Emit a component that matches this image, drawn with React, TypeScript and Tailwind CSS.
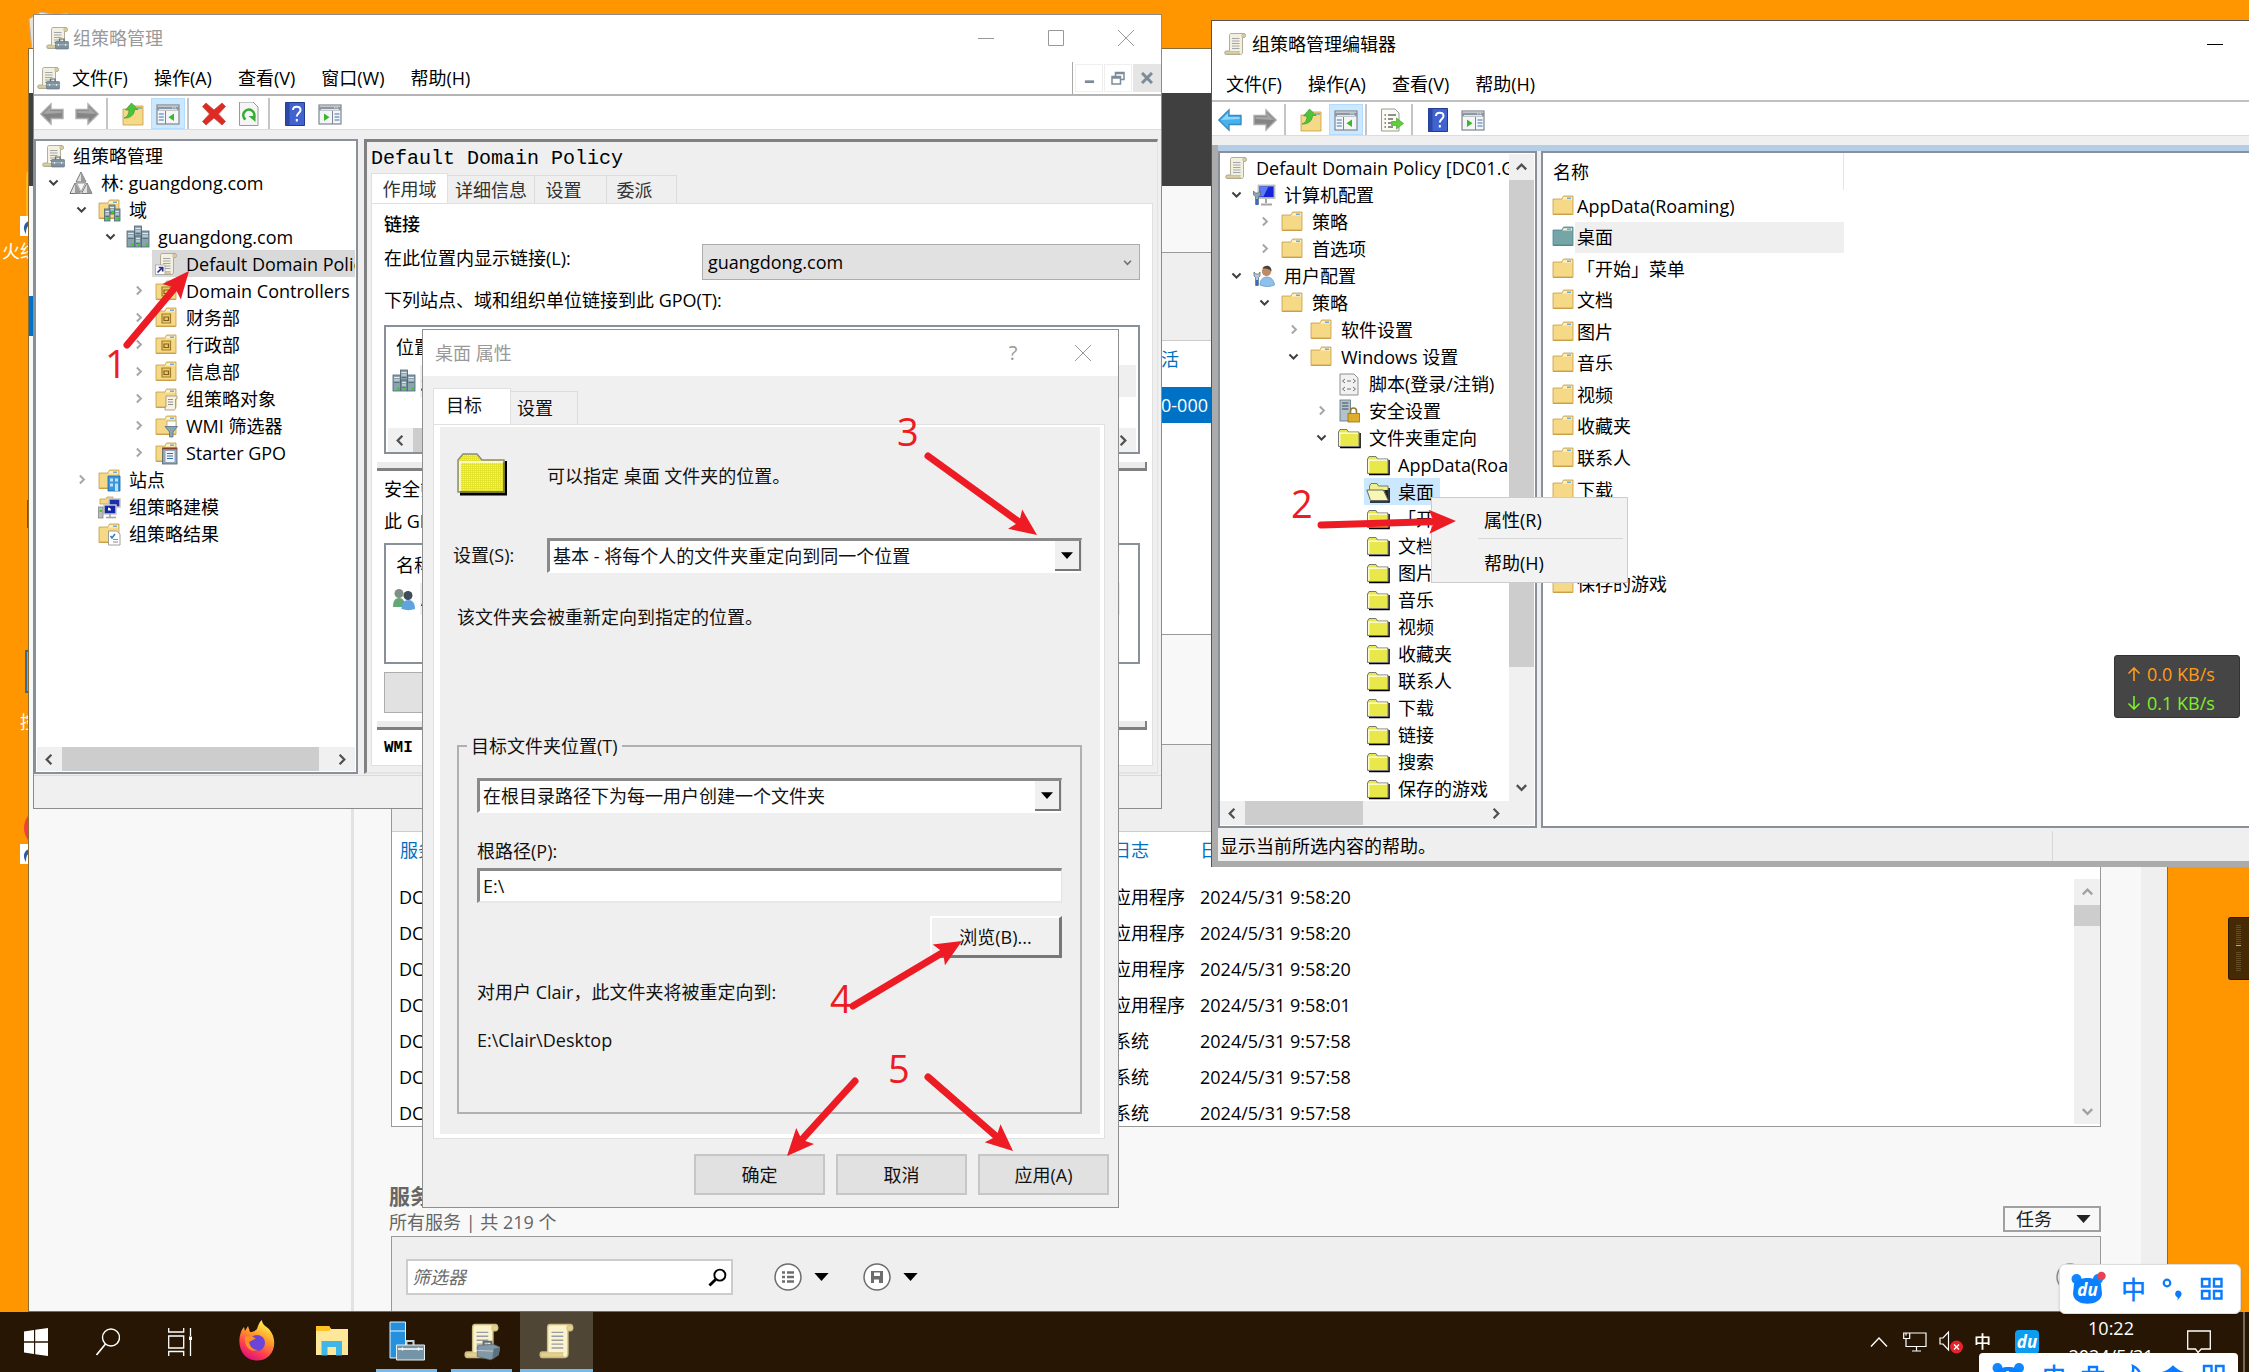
import React from "react";
import clsx from "clsx";

const uiFont = "font-['Open_Sans','Noto_Sans_CJK_SC',sans-serif]";
const monoFont = "font-['Liberation_Mono','Noto_Sans_CJK_SC',monospace]";

/* ---------- icons ---------- */

type IconProps = { className?: string };

function Svg({ className = "size-6", box = "0 0 24 24", children }: { className?: string; box?: string; children: React.ReactNode }) {
	return (
		<svg className={clsx("shrink-0", className)} viewBox={box} fill="none" aria-hidden="true">
			{children}
		</svg>
	);
}

function ScrollShape({ paper = "#f4f0e0", roll = "#dccf9f", edge = "#aaa48e" }: { paper?: string; roll?: string; edge?: string }) {
	return (
		<>
			<path d="M8 1.500h13c2 0 2 4 0 4h-1.500V20c0 1.500-.8 2.500-2 2.500H3c-1.700 0-1.700-3.500 0-3.500h3.500V3.500c0-1.200.5-2 1.500-2z" fill={paper} stroke={edge} strokeWidth=".9" />
			<path d="M19.500 2c-1 .5-1 2.800 0 3.300H21.500c1.500-.3 1.500-3 0-3.300zM3 19.500c-1.200.4-1.200 2.200 0 2.600h14c-1.300-.5-1.300-2-.5-2.600z" fill={roll} stroke={edge} strokeWidth=".5" />
			<path d="M9 6.500h7.500M9 9h7.500M9 11.500h7.500M9 14h7.500M9 16.500h7.500" stroke="#9a9ca6" strokeWidth=".9" />
		</>
	);
}
const ScrollIcon = ({ className }: IconProps) => (
	<Svg className={className}>
		<ScrollShape />
	</Svg>
);
const ScrollToolsIcon = ({ className }: IconProps) => (
	<Svg className={className}>
		<ScrollShape />
		<path d="M14.500 15.500V13h4.500v2.500" stroke="#5d6c78" strokeWidth="1.200" />
		<rect x="10.500" y="15.500" width="13" height="7.500" rx=".8" fill="#7e919e" stroke="#5a6975" strokeWidth=".6" />
		<path d="M10.500 18.800h13" stroke="#c3ced6" strokeWidth=".7" />
		<path d="M13.500 18v1.800M20.500 18v1.800" stroke="#eee" strokeWidth="1.100" />
	</Svg>
);
const BigScrollIcon = ({ tools }: { tools?: boolean }) => (
	<Svg className="h-10 w-9" box="1 0 23 24">
		<ScrollShape paper="#fbf3cb" roll="#e5d189" edge="#cdbb84" />
		{tools && (
			<>
				<path d="M13.500 15.500V12.500h5v2.500" stroke="#5d6c78" strokeWidth="1.200" />
				<path d="M9.500 15l10-1 4.500 2-1 5-5 3-8.500-2z" fill="#8298a6" stroke="#5a6975" strokeWidth=".5" />
				<path d="M19 24l1-7 4-1-1 5z" fill="#5c7180" />
				<path d="M9.500 18l10 .5" stroke="#c3ced6" strokeWidth=".6" />
			</>
		)}
	</Svg>
);
const ScrollLinkIcon = () => (
	<Svg>
		<ScrollShape />
		<rect x="1.500" y="13" width="9.500" height="9.500" fill="#fff" stroke="#999" strokeWidth=".7" />
		<path d="M3.500 20.500l4.500-4.500M4.700 15.500h4v4" stroke="#2a2f80" strokeWidth="1.700" />
	</Svg>
);
const ForestIcon = () => (
	<Svg>
		<path d="M12 1L7 11h10zM6 12L1 22.500h10.500zM18 12l-5.500 10.500H23z" fill="#e2e2e2" stroke="#757575" strokeWidth="1" />
		<path d="M12 1v10l5 0zM6 12v10.500h5.500zM18 12v10.500H23z" fill="#9b9b9b" />
		<path d="M7.500 12h9L12 21z" fill="#f6f6f6" stroke="#7d7d7d" strokeWidth=".8" />
	</Svg>
);

function FolderShape({ tint = "#f6d986", edge = "#c79d44" }: { tint?: string; edge?: string }) {
	return (
		<>
			<path d="M2 5h9l1.500-3H22v18.500H2z" fill={tint} stroke={edge} strokeWidth=".8" />
			<path d="M12.500 3.200h8.500v2.300h-9.500z" fill="#fdf3cf" />
			<path d="M16 4.200h4" stroke="#4a9be0" strokeWidth="1.200" />
			<path d="M2.500 20.200h19" stroke={edge} strokeWidth="1.200" />
		</>
	);
}
function ServerShape({ x = 0, y = 0, w = 6, h = 13 }: { x?: number; y?: number; w?: number; h?: number }) {
	return (
		<>
			<rect x={x} y={y} width={w} height={h} fill="#8aa3af" stroke="#4c6370" strokeWidth=".8" />
			<path d={`M${x + 1} ${y + 2.5}h${w - 2}M${x + 1} ${y + 5}h${w - 2}`} stroke="#dfe9ee" strokeWidth="1" />
			<path d={`M${x + 1} ${y + 7.5}h${w - 2}`} stroke="#4c6370" strokeWidth=".8" />
			<rect x={x + w - 3.500} y={y + h - 3.500} width="2.600" height="2.600" fill="#2fd51e" />
		</>
	);
}
const FolderIcon = ({ className }: IconProps) => (
	<Svg className={className}>
		<FolderShape />
	</Svg>
);
const TealFolderIcon = ({ className }: IconProps) => (
	<Svg className={className}>
		<FolderShape tint="#76a5a8" edge="#4d8690" />
	</Svg>
);
const DomainIcon = () => (
	<Svg>
		<ServerShape x={8.500} y={1} w={7} h={13} />
		<ServerShape x={1} y={6} w={7.500} h={16} />
		<ServerShape x={15.500} y={6} w={7.500} h={16} />
		<ServerShape x={9} y={11} w={6} h={11} />
	</Svg>
);
const DomainsIcon = () => (
	<Svg>
		<FolderShape />
		<ServerShape x={12} y={7} w={6} h={9} />
		<ServerShape x={7.500} y={11} w={5.500} h={12} />
		<ServerShape x={17.500} y={11} w={5.500} h={12} />
	</Svg>
);
const OuIcon = () => (
	<Svg>
		<FolderShape />
		<path d="M8 8h8.500v9H8z" fill="#efc861" stroke="#a07d2c" strokeWidth="1.200" />
		<path d="M10 11h4.500v3.500H10z" stroke="#7d6020" strokeWidth="1.200" />
	</Svg>
);
const GpoFolderIcon = () => (
	<Svg>
		<FolderShape />
		<path d="M12 9h11v3h-1.500v9c0 1-.5 2-1.500 2h-9v-3h1z" fill="#faf3dc" stroke="#9b8f74" strokeWidth=".8" />
		<path d="M14 12.500h5M14 15h5M14 17.500h5" stroke="#8b8f9a" strokeWidth="1" />
	</Svg>
);
const FilterFolderIcon = () => (
	<Svg>
		<FolderShape />
		<rect x="13" y="7" width="9" height="6" fill="#fff" stroke="#999" strokeWidth=".7" />
		<path d="M11 12.500h12.500l-4.500 5.500v5h-3.500v-5z" fill="#8ba5b3" stroke="#587181" strokeWidth=".8" />
	</Svg>
);
const StarterIcon = () => (
	<Svg>
		<FolderShape />
		<rect x="8.500" y="7" width="14.500" height="16" fill="#8fa6ba" stroke="#55606b" strokeWidth=".8" />
		<path d="M8.500 7.500h14.500" stroke="#8b3b2b" strokeWidth="1.600" />
		<rect x="11.500" y="10" width="9" height="11" fill="#eef3f8" />
		<path d="M13 12.500h6M13 15h6M13 17.500h6" stroke="#3c6fa8" strokeWidth="1" />
	</Svg>
);
const SitesIcon = () => (
	<Svg>
		<FolderShape />
		<path d="M11 8h12v15H11z" fill="#3b97dc" stroke="#1b63a5" strokeWidth=".8" />
		<path d="M13 10.500h3v3h-3zM18 10.500h3v3h-3zM13 15.500h3v3h-3zM18 15.500h3V23h-3z" fill="#bfe0fa" />
	</Svg>
);
const ModelIcon = () => (
	<Svg>
		<path d="M3 4h6l1-2h6v7H3z" fill="#f6d986" stroke="#c79d44" strokeWidth=".8" />
		<rect x="12" y="4" width="11" height="8" fill="#1c2fae" stroke="#c4c4c4" strokeWidth="1.500" />
		<rect x="7" y="10" width="12" height="9" fill="#1426a8" stroke="#c9c9c9" strokeWidth="1.500" />
		<path d="M9 22.500h10M13 19v3" stroke="#a0a0a0" strokeWidth="1.500" />
		<path d="M11 12.500a3 3 0 013 3h-3z" fill="#fff" />
		<rect x="1.500" y="12" width="4.500" height="11" fill="#bdbdbd" stroke="#7b7b7b" strokeWidth=".7" />
		<rect x="2.500" y="15" width="2.500" height="2" fill="#35d225" />
	</Svg>
);
const ResultsIcon = () => (
	<Svg>
		<FolderShape />
		<path d="M11.500 9h8l3.500 3v11H11.500z" fill="#fff" stroke="#888" strokeWidth=".8" />
		<path d="M13.500 14l1.500 2 3-4" stroke="#3778c2" strokeWidth="1.500" />
		<path d="M16 17.500h5M16 20h5" stroke="#8a8a8a" strokeWidth="1" />
	</Svg>
);
const ComputerIcon = () => (
	<Svg>
		<rect x="6.500" y="2.500" width="16" height="12.500" fill="#1526d8" stroke="#bcbcbc" strokeWidth="1.800" />
		<path d="M7.500 3.500h9l-5 10h-4z" fill="#5f7af2" />
		<path d="M14 16v4M9 21.500h11" stroke="#a5a5a5" strokeWidth="2" />
		<path d="M1.500 8v4l2 1.500v8h3v-8l2-1.500V8l-2 2H3.500z" fill="#8fa6b8" stroke="#506676" strokeWidth=".7" />
		<path d="M4 16h2v6H4z" fill="#2f70c0" />
	</Svg>
);
const UserIcon = () => (
	<Svg>
		<path d="M8 21c0-5 3-8 7-8s7 3 7.500 8c-4 2-10 2-14.500 0z" fill="#8fc0ea" stroke="#5c94c5" strokeWidth=".7" />
		<circle cx="14.500" cy="7.500" r="4.600" fill="#c08a63" />
		<path d="M10.500 4.500C12 .5 20 .5 19.500 7.500c-1.500-2.500-5-3-9-3z" fill="#4a4038" />
		<path d="M2 8v4l1.500 1.500v8h3v-8L8 12V8L6.500 10h-3z" fill="#b8c6d2" stroke="#506676" strokeWidth=".7" />
		<path d="M4 16h2v5.500H4z" fill="#2f70c0" />
	</Svg>
);
const UsersIcon = () => (
	<Svg>
		<path d="M1 20c0-6 2-9 6-9s6 3 6 9z" fill="#63a877" />
		<circle cx="7" cy="6.500" r="4.500" fill="#7f9184" />
		<path d="M9.500 22c0-6 3-9 7-9s6.500 3 6.500 9c-4 1.500-9 1.500-13.500 0z" fill="#5fa3df" />
		<circle cx="16" cy="8.500" r="4.500" fill="#3f4c59" />
	</Svg>
);
const ScriptIcon = () => (
	<Svg>
		<path d="M3 2h14l4 4v17H3z" fill="#f1f1f1" stroke="#8f8f8f" strokeWidth="1" />
		<path d="M8 7l-2.500 2L8 11M16 7l2.500 2L16 11M10 9h4M8 15l-2.500 2L8 19M16 15l2.500 2L16 19M10 17h4" stroke="#707070" strokeWidth="1" />
	</Svg>
);
const SecurityIcon = () => (
	<Svg>
		<rect x="3" y="1" width="10.500" height="21" fill="#b3c3cc" stroke="#5b717d" strokeWidth=".8" />
		<path d="M5 4h6.500M5 7h6.500M5 10h6.500" stroke="#3c4c56" strokeWidth="1.200" />
		<path d="M13.500 14.500V12a3 3 0 016 0v2.500" stroke="#8f7a33" strokeWidth="1.600" />
		<rect x="11" y="14.500" width="11.500" height="8.500" fill="#e0ad2b" stroke="#9a7212" strokeWidth=".8" />
	</Svg>
);
const ClassicFolderIcon = ({ className }: IconProps) => (
	<Svg className={className}>
		<path d="M3 21.500h20V7" stroke="#000" strokeWidth="1.600" />
		<path d="M1.500 6l1.500-2.500h7L11.500 6H22v14.500H1.500z" fill="#e8e84a" stroke="#777" strokeWidth="1" />
		<path d="M2.800 19.500V7.200h18.200" stroke="#fffff0" strokeWidth="1.200" />
	</Svg>
);
const ClassicOpenIcon = () => (
	<Svg>
		<path d="M4 22h19V8" stroke="#000" strokeWidth="1.600" />
		<path d="M3.500 9V6L5 3.500h6L12.500 6H22v14.500H6z" fill="#f1f18a" stroke="#777" strokeWidth="1" />
		<path d="M.8 10h16.500l5 10.500H4.500z" fill="#f7f7b4" stroke="#666" strokeWidth="1" />
		<path d="M18 10l4.500 10.500V10z" fill="#222" />
	</Svg>
);
const BigFolderIcon = () => (
	<Svg className="h-[43px] w-[50px]" box="0 0 50 43">
		<defs>
			<pattern id="dither" width="2" height="2" patternUnits="userSpaceOnUse">
				<rect width="2" height="2" fill="#e4e42c" />
				<rect width="1" height="1" fill="#f0f08c" />
			</pattern>
		</defs>
		<path d="M3 41h46V8" stroke="#000" strokeWidth="3" />
		<path d="M1 39V7l5-6h14l5 6h22v32z" fill="url(#dither)" stroke="#8b8b8b" strokeWidth="1.500" />
		<path d="M3 38V9h43" stroke="#fffff0" strokeWidth="1.500" />
		<path d="M3 39h44V9" stroke="#77771a" strokeWidth="1.500" />
	</Svg>
);

const BackIcon = ({ blue }: { blue?: boolean }) => (
	<Svg>
		<path d="M.8 12L11 2v5.500h12v9H11V22z" fill={blue ? "#45b1ee" : "#858585"} stroke={blue ? "#3a8dc4" : "#adadad"} strokeWidth="1.400" />
		<path d="M3 12l7-7v4h11.500v2z" fill={blue ? "#8fd6f8" : "#a5a5a5"} />
	</Svg>
);
const ForwardIcon = () => (
	<Svg>
		<path d="M23.200 12L13 2v5.500H1v9h12V22z" fill="#858585" stroke="#adadad" strokeWidth="1.400" />
		<path d="M21 12l-7-7v4H2.500v2z" fill="#a5a5a5" />
	</Svg>
);
const UpFolderIcon = () => (
	<Svg>
		<path d="M2 7h8l2-3h10v19H2z" fill="#f6d986" stroke="#c79d44" strokeWidth=".8" />
		<path d="M16 6h5" stroke="#4a9be0" strokeWidth="1.200" />
		<path d="M3 16c3.500-1 5-4 5-8H4.500L10.500 1 17 7.500h-3.500c0 5-4 9-10.500 8.500z" fill="#4cc33a" stroke="#3b9a2d" strokeWidth=".7" />
	</Svg>
);
const PanelIcon = ({ flip }: { flip?: boolean }) => (
	<Svg>
		<rect x="1" y="3" width="22" height="19" fill="#f4f5f6" stroke="#7d8690" strokeWidth="1.200" />
		<path d="M1 4.500h22v4H1z" fill="#8d97a1" />
		<path d="M16 5.800h1.500M18.500 5.800H20M3 7.500h18" stroke="#dfe5ea" />
		{flip ? (
			<>
				<path d="M14.500 9v13" stroke="#7d8690" />
				<path d="M16.500 12h5M16.500 15h5M16.500 18h5" stroke="#3d73b5" strokeWidth="1.200" />
				<path d="M6 11.500v7.500l5.500-3.700z" fill="#3ab72b" />
			</>
		) : (
			<>
				<path d="M9.500 9v13" stroke="#7d8690" />
				<path d="M2.800 12h5M2.800 15h5M2.800 18h5" stroke="#3d73b5" strokeWidth="1.200" />
				<path d="M18 11.500v7.500l-5.500-3.700z" fill="#3ab72b" />
			</>
		)}
	</Svg>
);
const DeleteIcon = () => (
	<Svg>
		<path d="M4 1l8 7L20 1l3.500 3.500L16.500 12l7 7.500L20 23l-8-7-8 7-3.500-3.500L7.500 12l-7-7.500z" fill="#dd2a22" stroke="#c04a44" strokeWidth=".8" />
	</Svg>
);
const RefreshIcon = () => (
	<Svg>
		<path d="M2.500 0H16l5 5v18.500H2.500z" fill="#f5f5f5" stroke="#9a9a9a" />
		<path d="M8.500 17.500a5.500 5.500 0 118-1.500" stroke="#35ad34" strokeWidth="2.600" />
		<path d="M11.500 14h7v6z" fill="#35ad34" />
	</Svg>
);
const ExportIcon = () => (
	<Svg>
		<path d="M1.500 1H15l4 4v18H1.500z" fill="#fbfbf1" stroke="#9a9a9a" />
		<path d="M4.500 7H6M4.500 11H6M4.500 15H6M4.500 19H6M8 7h8M8 11h5M8 15h3M8 19h5" stroke="#6c6c6c" strokeWidth="1.300" />
		<path d="M11.500 13.500h5v-3.500l7 5.500-7 5.500v-3.500h-5z" fill="#62cc3f" stroke="#4aa634" strokeWidth=".7" />
	</Svg>
);
const HelpIcon = () => (
	<Svg>
		<path d="M2.500 .5h19v23h-19z" fill="#4063cf" stroke="#23398d" />
		<path d="M2.500 .5h4v23h-4z" fill="#2b47a8" />
		<path d="M10 8c0-4.500 7.500-4.500 7.500 0 0 3-3.700 3-3.700 6.500M13.800 17v2.500" stroke="#fff" strokeWidth="2" />
	</Svg>
);

function Chevron({ dir, className = "size-[15px]" }: { dir: "up" | "down" | "left" | "right"; className?: string }) {
	const paths = { up: "M3 10l5-5 5 5", down: "M3 5.500l5 5 5-5", left: "M10 3L5 8l5 5", right: "M6 3l5 5-5 5" };
	return (
		<Svg className={className} box="0 0 16 16">
			<path d={paths[dir]} stroke="currentColor" strokeWidth="2.400" />
		</Svg>
	);
}
const Triangle = ({ className = "h-[9px] w-[15px]" }: IconProps) => (
	<Svg className={className} box="0 0 16 9">
		<path d="M0 0h16L8 9z" fill="currentColor" />
	</Svg>
);
const MinIcon = () => (
	<Svg className="size-4" box="0 0 16 16">
		<path d="M0 8.500h16" stroke="currentColor" />
	</Svg>
);
const MaxIcon = () => (
	<Svg className="size-4" box="0 0 16 16">
		<path d="M.5 .5h15v15H.5z" stroke="currentColor" />
	</Svg>
);
const CloseIcon = () => (
	<Svg className="size-4" box="0 0 16 16">
		<path d="M0 0l16 16M16 0L0 16" stroke="currentColor" />
	</Svg>
);

/* ---------- shared pieces ---------- */

type TreeRow = { level: number; open?: boolean; closed?: boolean; icon: React.ReactNode; label: string; selected?: boolean };

const indents = ["pl-0.5", "pl-1", "pl-8", "pl-[61px]", "pl-[89px]", "pl-[118px]"];

function Tree({ rows, fill }: { rows: TreeRow[]; fill?: boolean }) {
	return (
		<ul className="min-w-0 flex-1 overflow-hidden">
			{rows.map((row, i) => (
				<li key={i} className={clsx("flex h-[27px] items-center whitespace-nowrap", indents[row.level])}>
					{row.level > 0 && (
						<span className="mr-0.5 flex w-6 shrink-0 justify-center">
							{row.open && <Chevron dir="down" className="size-[13px] text-[#404040]" />}
							{row.closed && <Chevron dir="right" className="size-[13px] text-[#a6a6a6]" />}
						</span>
					)}
					<span className={clsx("flex h-full items-center gap-2 pr-1.5 pl-0.5", row.selected && (fill ? "flex-1 bg-[#d9d9d9]" : "bg-[#cce8ff]"))}>
						{row.icon}
						{row.label}
					</span>
				</li>
			))}
		</ul>
	);
}

function HScroll({ thumb, trail = "pr-0" }: { thumb: string; trail?: string }) {
	return (
		<div className={clsx("flex h-6 shrink-0 items-center bg-[#f0f0f0] text-[#505050]", trail)}>
			<span className="flex w-[25px] justify-center">
				<Chevron dir="left" />
			</span>
			<span className={clsx("h-full bg-[#cdcdcd]", thumb)} />
			<span className="ml-auto flex w-7 justify-center">
				<Chevron dir="right" />
			</span>
		</div>
	);
}

function ToolButton({ label, active, children }: { label: string; active?: boolean; children: React.ReactNode }) {
	return (
		<button type="button" aria-label={label} className={clsx("flex h-full w-[34px] items-center justify-center", active && "border border-[#b3dcff] bg-[#cce8ff]")}>
			{children}
		</button>
	);
}
const ToolSep = () => <span className="ml-px h-full w-[9px] border-l-2 border-[#c4c4c4]" />;

function MenuBar({ items }: { items: string[] }) {
	return (
		<>
			{items.map((item) => (
				<button key={item} type="button">
					{item}
				</button>
			))}
		</>
	);
}

function ComboBox({ id, value }: { id: string; value: string }) {
	return (
		<div className="flex h-[35px] flex-1 border-t-[3px] border-r border-b-2 border-l-[3px] border-[#8a8a8a] border-r-[#e3e3e3] border-b-white bg-white">
			<select id={id} className="min-w-0 flex-1 appearance-none bg-white pl-[3px] outline-none">
				<option>{value}</option>
			</select>
			<span className="pointer-events-none flex w-[26px] items-center justify-center border-r-2 border-b-2 border-[#777] bg-[#f0f0f0] text-black">
				<Triangle className="h-[7px] w-3" />
			</span>
		</div>
	);
}

/* ---------- server manager ---------- */

const events = [
	["DC01", "应用程序", "2024/5/31 9:58:20"],
	["DC01", "应用程序", "2024/5/31 9:58:20"],
	["DC01", "应用程序", "2024/5/31 9:58:20"],
	["DC01", "应用程序", "2024/5/31 9:58:01"],
	["DC01", "系统", "2024/5/31 9:57:58"],
	["DC01", "系统", "2024/5/31 9:57:58"],
	["DC01", "系统", "2024/5/31 9:57:58"],
];

function ServerManager() {
	return (
		<section className="absolute top-12 right-[81px] bottom-0 left-7 flex flex-col overflow-hidden border border-[#8a6a35] bg-[#f8f8f8]">
			<div className="h-11 shrink-0 bg-white" />
			<div className="h-[93px] shrink-0 bg-[#404040]" />
			<div className="flex min-h-0 flex-1">
				<div className="w-[325px] shrink-0 border-r-[3px] border-[#e2e2e2] pt-[110px]">
					<div className="h-10 bg-[#0072c6]" />
				</div>
				<div className="flex min-w-0 flex-1 flex-col pt-[66px] pr-10 pl-[37px]">
					<div className="h-[383px] shrink-0 border border-[#999] bg-white">
						<div className="h-[88px] border-b border-[#ccc] bg-[#efefef]" />
						<div className="h-[46px] pt-0.5 pl-[751px] leading-8 text-[#0070c0]">激活</div>
						<div className="flex h-9 items-center bg-[#0072c6] pl-[769px] text-white">0-000</div>
					</div>
					<div className="mt-[109px] flex h-[383px] shrink-0 flex-col overflow-hidden border border-[#999] bg-white">
						<div className="h-[87px] shrink-0 border-b border-[#ccc] bg-[#efefef]" />
						<div className="flex min-h-0 flex-1">
							<div className="min-w-0 flex-1 overflow-hidden">
								<table className="w-full table-fixed text-left text-black">
									<colgroup>
										<col className="w-[721px]" />
										<col className="w-[87px]" />
										<col />
									</colgroup>
									<thead>
										<tr className="h-[47px] align-top text-[#0070c0]">
											<th className="pt-1.5 pl-2 font-normal">服务器名称</th>
											<th className="pt-1.5 font-normal">日志</th>
											<th className="pt-1.5 font-normal">日期和时间</th>
										</tr>
									</thead>
									<tbody>
										{events.map(([server, log, time], i) => (
											<tr key={i} className="h-9">
												<td className="pl-[7px]">{server}</td>
												<td>{log}</td>
												<td>{time}</td>
											</tr>
										))}
									</tbody>
								</table>
							</div>
							<div className="mt-[47px] mb-0.5 flex w-[26px] flex-col bg-[#f0f0f0] text-[#a0a0a0]">
								<span className="flex h-[26px] items-center justify-center">
									<Chevron dir="up" />
								</span>
								<span className="h-[21px] bg-[#cdcdcd]" />
								<span className="mt-auto flex h-[26px] items-center justify-center">
									<Chevron dir="down" />
								</span>
							</div>
						</div>
					</div>
					<div className="mt-[54px] flex h-[55px] shrink-0 items-end justify-between text-[#666]">
						<div className="-ml-0.5">
							<h2 className="text-[21px] leading-6 font-bold">服务</h2>
							<p className="leading-7">所有服务 | 共 219 个</p>
						</div>
						<button type="button" className="mb-1 flex h-[26px] w-[98px] items-center justify-between border-2 border-[#a0a0a0] pr-2 pl-[11px] text-[#222]">
							任务
							<Triangle className="h-2 w-[15px]" />
						</button>
					</div>
					<div className="flex flex-1 items-start border border-b-0 border-[#999] bg-[#efefef] pt-[22px] pr-4 pl-3.5">
						<label className="flex h-9 w-[327px] items-center border-2 border-[#ccc] bg-white pr-1 pl-1">
							<input aria-label="筛选器" placeholder="筛选器" className="min-w-0 flex-1 italic outline-none placeholder:text-[#6b6b6b]" />
							<Svg className="size-[19px] text-black" box="0 0 20 20">
								<circle cx="12.500" cy="7.500" r="5.800" stroke="currentColor" strokeWidth="2" />
								<path d="M8 12l-6.500 6.500" stroke="currentColor" strokeWidth="3" />
							</Svg>
						</label>
						<div className="ml-[41px] flex h-9 items-center text-black">
							<Svg className="size-7" box="0 0 28 28">
								<circle cx="14" cy="14" r="13" fill="#fff" stroke="#6d6d6d" strokeWidth="1.500" />
								<path d="M8 9.500h3M8 14h3M8 18.500h3M13 9.500h7M13 14h7M13 18.500h7" stroke="#6d6d6d" strokeWidth="2.600" />
							</Svg>
							<Triangle className="ml-3 h-2 w-[15px]" />
							<Svg className="ml-[34px] size-7" box="0 0 28 28">
								<circle cx="14" cy="14" r="13" fill="#fff" stroke="#6d6d6d" strokeWidth="1.500" />
								<path d="M8 8h12v12H8z" fill="#6d6d6d" />
								<path d="M11 9.500h6v3.500h-6zM11 16.500h5V20h-5z" fill="#fff" />
							</Svg>
							<Triangle className="ml-3 h-2 w-[15px]" />
						</div>
						<Svg className="mt-1 ml-auto size-7" box="0 0 28 28">
							<circle cx="14" cy="14" r="13" stroke="#8b8b8b" strokeWidth="1.500" />
						</Svg>
					</div>
				</div>
				<div className="w-[26px] shrink-0 bg-[#efefef]" />
			</div>
		</section>
	);
}

/* ---------- group policy management ---------- */

const consoleTree: TreeRow[] = [
	{ level: 0, icon: <ScrollToolsIcon />, label: "组策略管理" },
	{ level: 1, open: true, icon: <ForestIcon />, label: "林: guangdong.com" },
	{ level: 2, open: true, icon: <DomainsIcon />, label: "域" },
	{ level: 3, open: true, icon: <DomainIcon />, label: "guangdong.com" },
	{ level: 4, icon: <ScrollLinkIcon />, label: "Default Domain Policy", selected: true },
	{ level: 4, closed: true, icon: <OuIcon />, label: "Domain Controllers" },
	{ level: 4, closed: true, icon: <OuIcon />, label: "财务部" },
	{ level: 4, closed: true, icon: <OuIcon />, label: "行政部" },
	{ level: 4, closed: true, icon: <OuIcon />, label: "信息部" },
	{ level: 4, closed: true, icon: <GpoFolderIcon />, label: "组策略对象" },
	{ level: 4, closed: true, icon: <FilterFolderIcon />, label: "WMI 筛选器" },
	{ level: 4, closed: true, icon: <StarterIcon />, label: "Starter GPO" },
	{ level: 2, closed: true, icon: <SitesIcon />, label: "站点" },
	{ level: 2, icon: <ModelIcon />, label: "组策略建模" },
	{ level: 2, icon: <ResultsIcon />, label: "组策略结果" },
];

const RaisedBar = () => <div className="-mx-[7px] h-[9px] shrink-0 border-r-2 border-b-[3px] border-[#808080] bg-[#ececec]" />;

function PolicyConsole() {
	return (
		<section className="absolute top-[14px] left-[33px] flex h-[795px] w-[1129px] flex-col border border-[#8c8c8c] bg-[#efefef] text-black">
			<header className="flex h-[47px] shrink-0 items-center bg-white pr-[27px] pb-0.5 pl-[11px] text-[#999]">
				<ScrollToolsIcon />
				<h1 className="ml-1">组策略管理</h1>
				<div className="ml-auto flex gap-[54px]">
					<button type="button" aria-label="最小化">
						<MinIcon />
					</button>
					<button type="button" aria-label="最大化">
						<MaxIcon />
					</button>
					<button type="button" aria-label="关闭">
						<CloseIcon />
					</button>
				</div>
			</header>
			<nav className="flex h-[34px] shrink-0 items-center border-b-2 border-[#b4b4b4] bg-white pl-0.5">
				<ScrollToolsIcon />
				<div className="ml-3 flex gap-[26px]">
					<MenuBar items={["文件(F)", "操作(A)", "查看(V)", "窗口(W)", "帮助(H)"]} />
				</div>
				<div className="ml-auto flex h-full items-center gap-px border-l border-[#a8a8a8] pl-0.5 text-[#7c8b9a]">
					<button type="button" aria-label="最小化子窗口" className="flex h-7 w-7 items-center justify-center border border-[#efefef]">
						<Svg className="size-[11px]" box="0 0 12 12">
							<path d="M1 9.500h10" stroke="currentColor" strokeWidth="3" />
						</Svg>
					</button>
					<button type="button" aria-label="还原子窗口" className="flex h-7 w-7 items-center justify-center border border-[#efefef]">
						<Svg className="size-[14px]" box="0 0 14 14">
							<path d="M4.500 5V1.500h8.500v7h-3M4.500 2.500H13M1 5.500h8.500V13H1zM1 7h8.500" stroke="currentColor" strokeWidth="1.500" />
						</Svg>
					</button>
					<button type="button" aria-label="关闭子窗口" className="flex h-7 w-7 items-center justify-center bg-[#e5e5e5]">
						<Svg className="size-[12px]" box="0 0 12 12">
							<path d="M1 1l10 10M11 1L1 11" stroke="currentColor" strokeWidth="3" />
						</Svg>
					</button>
				</div>
			</nav>
			<div className="flex h-[34px] shrink-0 items-center gap-px border-b border-[#dcdcdc] bg-white pt-0.5 pl-px">
				<ToolButton label="后退">
					<BackIcon />
				</ToolButton>
				<ToolButton label="前进">
					<ForwardIcon />
				</ToolButton>
				<ToolSep />
				<ToolButton label="上一级">
					<UpFolderIcon />
				</ToolButton>
				<ToolButton label="显示控制台树" active>
					<PanelIcon />
				</ToolButton>
				<ToolSep />
				<ToolButton label="删除">
					<DeleteIcon />
				</ToolButton>
				<ToolButton label="刷新">
					<RefreshIcon />
				</ToolButton>
				<ToolSep />
				<ToolButton label="帮助">
					<HelpIcon />
				</ToolButton>
				<ToolButton label="显示操作窗格">
					<PanelIcon flip />
				</ToolButton>
			</div>
			<div className="flex min-h-0 flex-1 gap-1.5 pt-[9px] pr-[3px]">
				<div className="flex w-[324px] shrink-0 flex-col border-2 border-[#8a909a] bg-white px-px pt-px pb-px">
					<Tree rows={consoleTree} fill />
					<HScroll thumb="w-[257px]" />
				</div>
				<div className="flex min-w-0 flex-1 flex-col border-t-[3px] border-r border-b-2 border-l-[3px] border-[#808080] border-r-[#e3e3e3] border-b-[#e3e3e3] pr-1 pb-1.5 pl-1">
					<h2 className={clsx("flex h-[31px] shrink-0 items-center pt-0.5 text-[20px]", monoFont)}>Default Domain Policy</h2>
					<div className="flex h-[30px] shrink-0 items-end text-[#333]" role="tablist">
						<button type="button" role="tab" className="h-[30px] w-[77px] border border-b-0 border-[#e0e0e0] bg-white">
							作用域
						</button>
						<button type="button" role="tab" className="h-7 w-[87px] border-t border-r border-[#dcdcdc]">
							详细信息
						</button>
						<button type="button" role="tab" className="h-7 w-[72px] border-t border-r border-[#dcdcdc] pr-3.5">
							设置
						</button>
						<button type="button" role="tab" className="h-7 w-[70px] border-t border-r border-[#dcdcdc] pr-3.5">
							委派
						</button>
					</div>
					<div className="flex min-h-0 flex-1 flex-col overflow-hidden border border-[#e0e0e0] bg-white px-3">
						<h3 className="mt-1.5 h-7 shrink-0 leading-7 font-medium">链接</h3>
						<div className="mt-1.5 flex shrink-0 items-start justify-between">
							<label htmlFor="link-scope" className="leading-7">
								在此位置内显示链接(L):
							</label>
							<div className="flex h-9 w-[438px] items-center border border-[#adadad] bg-[#e1e1e1] pr-1.5">
								<select id="link-scope" className="h-full flex-1 appearance-none bg-[#e1e1e1] pl-[5px] outline-none">
									<option>guangdong.com</option>
								</select>
								<Chevron dir="down" className="pointer-events-none size-[11px] text-[#707070]" />
							</div>
						</div>
						<p className="mt-1.5 h-7 shrink-0 leading-7">下列站点、域和组织单位链接到此 GPO(T):</p>
						<div className="mt-[11px] flex h-[129px] shrink-0 flex-col border-2 border-[#8a909a] px-0.5">
							<span className="mt-1.5 ml-2 h-7 leading-7">位置</span>
							<div className="mt-1 flex h-8 items-center gap-1 pl-1">
								<DomainIcon />
								<span className="flex h-8 flex-1 items-center bg-[#efefef] pl-px">gu</span>
							</div>
							<div className="mt-auto">
								<HScroll thumb="w-[500px]" />
							</div>
						</div>
						<div className="h-2 shrink-0" />
						<RaisedBar />
						<h3 className="mt-1 h-7 shrink-0 leading-7">安全筛选</h3>
						<p className="mt-1 h-7 shrink-0 leading-7">此 GPO</p>
						<div className="mt-2 h-[121px] shrink-0 border-2 border-[#8a909a] px-0.5">
							<p className="mt-1.5 ml-2 h-7 leading-7">名称</p>
							<div className="mt-1 mr-4 flex h-8 items-center gap-1 pl-1">
								<UsersIcon />
								<span className="flex h-8 flex-1 items-center bg-[#efefef] pl-px">Au</span>
							</div>
						</div>
						<div className="mt-2 h-[41px] w-[130px] shrink-0 border border-[#adadad] bg-[#e1e1e1]" />
						<div className="h-2 shrink-0" />
						<RaisedBar />
						<h3 className={clsx("mt-1 h-7 shrink-0 text-[16px] leading-7 font-bold", monoFont)}>WMI</h3>
					</div>
				</div>
			</div>
			<footer className="mt-px h-[33px] shrink-0 border-t border-[#dadada] bg-[#f0f0f0]" />
		</section>
	);
}

/* ---------- group policy editor ---------- */

const redirectFolders = ["AppData(Roaming)", "桌面", "「开始」菜单", "文档", "图片", "音乐", "视频", "收藏夹", "联系人", "下载", "链接", "搜索", "保存的游戏"];

const editorTree: TreeRow[] = [
	{ level: 0, icon: <ScrollIcon />, label: "Default Domain Policy [DC01.GUANGDONG.COM]" },
	{ level: 1, open: true, icon: <ComputerIcon />, label: "计算机配置" },
	{ level: 2, closed: true, icon: <FolderIcon />, label: "策略" },
	{ level: 2, closed: true, icon: <FolderIcon />, label: "首选项" },
	{ level: 1, open: true, icon: <UserIcon />, label: "用户配置" },
	{ level: 2, open: true, icon: <FolderIcon />, label: "策略" },
	{ level: 3, closed: true, icon: <FolderIcon />, label: "软件设置" },
	{ level: 3, open: true, icon: <FolderIcon />, label: "Windows 设置" },
	{ level: 4, icon: <ScriptIcon />, label: "脚本(登录/注销)" },
	{ level: 4, closed: true, icon: <SecurityIcon />, label: "安全设置" },
	{ level: 4, open: true, icon: <ClassicFolderIcon />, label: "文件夹重定向" },
	...redirectFolders.map((label) => ({
		level: 5,
		icon: label === "桌面" ? <ClassicOpenIcon /> : <ClassicFolderIcon />,
		label,
		selected: label === "桌面",
	})),
];

function PolicyEditor() {
	return (
		<section className="absolute top-[20px] right-0 left-[1211px] flex h-[847px] flex-col overflow-hidden border-t border-l border-[#555] bg-[#efefef] text-black">
			<header className="flex h-[46px] shrink-0 items-center bg-white pr-[26px] pl-[11px]">
				<ScrollIcon />
				<h1 className="ml-[5px]">组策略管理编辑器</h1>
				<button type="button" aria-label="最小化" className="ml-auto">
					<MinIcon />
				</button>
			</header>
			<nav className="flex h-[35px] shrink-0 items-center gap-[26px] border-b-2 border-[#c0c0c0] bg-white pl-3.5">
				<MenuBar items={["文件(F)", "操作(A)", "查看(V)", "帮助(H)"]} />
			</nav>
			<div className="flex h-[34px] shrink-0 items-center gap-px border-b border-[#dcdcdc] bg-white pt-0.5 pl-px">
				<ToolButton label="后退">
					<BackIcon blue />
				</ToolButton>
				<ToolButton label="前进">
					<ForwardIcon />
				</ToolButton>
				<ToolSep />
				<ToolButton label="上一级">
					<UpFolderIcon />
				</ToolButton>
				<ToolButton label="显示控制台树" active>
					<PanelIcon />
				</ToolButton>
				<ToolSep />
				<ToolButton label="导出列表">
					<ExportIcon />
				</ToolButton>
				<ToolSep />
				<ToolButton label="帮助">
					<HelpIcon />
				</ToolButton>
				<ToolButton label="显示操作窗格">
					<PanelIcon flip />
				</ToolButton>
			</div>
			<div className="h-[9px] shrink-0" />
			<div className="flex min-h-0 flex-1 flex-col border-b-[6px] border-l-[6px] border-[#ababab]">
				<div className="h-1.5 shrink-0 bg-[#b5cee7]" />
				<div className="flex min-h-0 flex-1 gap-1">
					<div className="flex w-[319px] shrink-0 flex-col border-2 border-[#8a909a] bg-white pt-px pr-px pb-px">
						<div className="flex min-h-0 flex-1">
							<Tree rows={editorTree} />
							<div className="flex w-[25px] shrink-0 flex-col bg-[#f0f0f0] text-[#505050]">
								<span className="flex h-[26px] items-center justify-center">
									<Chevron dir="up" />
								</span>
								<span className="h-[487px] bg-[#cdcdcd]" />
								<span className="mt-auto flex h-7 items-center justify-center">
									<Chevron dir="down" />
								</span>
							</div>
						</div>
						<HScroll thumb="w-[118px]" trail="pr-[25px]" />
					</div>
					<div className="min-w-0 flex-1 border-2 border-r-0 border-[#8a909a] bg-white pl-2">
						<div className="flex h-[37px] w-[293px] items-center border-r border-[#e5e5e5] pt-px pl-0.5">名称</div>
						<ul className="flex h-[410px] w-[293px] flex-col">
							{redirectFolders.map((name) => (
								<li key={name} className="flex flex-1 items-center">
									{name === "桌面" ? <TealFolderIcon /> : <FolderIcon />}
									<span className={clsx("flex h-full flex-1 items-center pl-0.5", name === "桌面" && "bg-[#efefef]")}>{name}</span>
								</li>
							))}
						</ul>
					</div>
				</div>
				<footer className="mt-px flex h-8 shrink-0 bg-[#efefef] pl-0.5">
					<p className="flex flex-1 items-center pt-px">显示当前所选内容的帮助。</p>
					<span className="mt-0.5 w-[197px] border-l border-[#d8d8d8]" />
				</footer>
			</div>
		</section>
	);
}

function ContextMenu() {
	return (
		<div role="menu" className="absolute top-[497px] left-[1431px] flex h-[86px] w-[197px] flex-col border border-[#ccc] bg-[#f2f2f2] pr-1 pl-[46px] text-black">
			<button type="button" role="menuitem" className="h-10 pt-1 pl-1.5 text-left">
				属性(R)
			</button>
			<hr className="border-[#d7d7d7]" />
			<button type="button" role="menuitem" className="flex-1 pt-1 pl-1.5 text-left">
				帮助(H)
			</button>
		</div>
	);
}

/* ---------- folder properties dialog ---------- */

function PropertiesDialog() {
	return (
		<section role="dialog" className="absolute top-[329px] left-[422px] flex h-[879px] w-[697px] flex-col border border-[#8f8f8f] bg-[#f0f0f0] text-[#111]">
			<header className="flex h-[46px] shrink-0 items-center bg-white pr-[27px] pl-3 text-[#999]">
				<h2>桌面 属性</h2>
				<button type="button" className="ml-auto w-4 text-[20px]">
					?
				</button>
				<button type="button" aria-label="关闭" className="ml-[54px]">
					<CloseIcon />
				</button>
			</header>
			<div className="flex flex-1 flex-col px-2.5 pt-3 pr-[13px]">
				<div className="flex h-9 shrink-0 items-end" role="tablist">
					<button type="button" role="tab" className="h-9 w-[78px] border border-b-0 border-[#e0e0e0] bg-white pr-4 pb-1">
						目标
					</button>
					<button type="button" role="tab" className="h-[33px] w-[67px] border-t border-r border-[#dcdcdc] pr-[18px]">
						设置
					</button>
				</div>
				<div className="h-[715px] border border-[#e0e0e0] bg-white pt-0.5 pr-1 pb-1 pl-1.5">
					<div className="flex h-full flex-col bg-[#efefef] pr-[18px] pl-[17px]">
						<div className="mt-[25px] flex h-[44px] items-center gap-10">
							<BigFolderIcon />
							<p className="pt-1">可以指定 桌面 文件夹的位置。</p>
						</div>
						<div className="mt-[42px] flex h-[35px] items-center">
							<label htmlFor="redirect-mode" className="-ml-1 w-[94px] pb-0.5">
								设置(S):
							</label>
							<ComboBox id="redirect-mode" value="基本 - 将每个人的文件夹重定向到同一个位置" />
						</div>
						<p className="mt-[30px] leading-7">该文件夹会被重新定向到指定的位置。</p>
						<fieldset className="mt-[101px] flex h-[382px] flex-col border-2 border-[#b0b0b0] px-[18px]">
							<legend className="-ml-2.5 px-1 leading-7">目标文件夹位置(T)</legend>
							<div className="mt-[18px] flex">
								<ComboBox id="target-location" value="在根目录路径下为每一用户创建一个文件夹" />
							</div>
							<label htmlFor="root-path" className="mt-6 leading-7">
								根路径(P):
							</label>
							<input
								id="root-path"
								defaultValue="E:\"
								className="mt-[3px] h-[35px] border-t-[3px] border-r border-b-2 border-l-[3px] border-[#8a8a8a] border-r-[#e3e3e3] border-b-[#e8e8e8] bg-white pl-[3px] outline-none"
							/>
							<button type="button" className="mt-[13px] h-[42px] w-[132px] self-end border-t-2 border-r-[3px] border-b-[3px] border-l-2 border-white border-r-[#777] border-b-[#777] bg-[#f0f0f0]">
								浏览(B)...
							</button>
							<p className="mt-5 leading-7">对用户 Clair，此文件夹将被重定向到:</p>
							<p className="mt-5 leading-7">E:\Clair\Desktop</p>
						</fieldset>
					</div>
				</div>
				<div className="mt-[15px] -mr-1 flex justify-end gap-[11px]">
					{["确定", "取消", "应用(A)"].map((label) => (
						<button key={label} type="button" className="h-[41px] w-[131px] border-2 border-[#c6c6c6] bg-[#e1e1e1]">
							{label}
						</button>
					))}
				</div>
			</div>
		</section>
	);
}

/* ---------- step markers ---------- */

const arrows = [
	{ from: [127, 345], to: [189, 271] },
	{ from: [1321, 525], to: [1456, 521] },
	{ from: [928, 456], to: [1037, 535] },
	{ from: [853, 1006], to: [962, 941] },
	{ from: [855, 1081], to: [787, 1156] },
	{ from: [928, 1077], to: [1013, 1151] },
];

function StepMarkers() {
	return (
		<div className="pointer-events-none absolute inset-0 text-[38px] leading-[40px] text-[#ed1c24]">
			<svg className="absolute inset-0 size-full" aria-hidden="true">
				{arrows.map(({ from, to }, i) => {
					const length = Math.hypot(to[0] - from[0], to[1] - from[1]);
					const angle = (Math.atan2(to[1] - from[1], to[0] - from[0]) * 180) / Math.PI;
					return (
						<g key={i} transform={`translate(${to[0]} ${to[1]}) rotate(${angle})`}>
							<path d={`M${-length} 0H-18`} stroke="#ed1c24" strokeWidth="7" strokeLinecap="round" />
							<path d="M0 0L-27-12l5 12-5 12z" fill="#ed1c24" />
						</g>
					);
				})}
			</svg>
			<span className="absolute top-[343px] left-[105px]">1</span>
			<span className="absolute top-[483px] left-[1291px]">2</span>
			<span className="absolute top-[411px] left-[897px]">3</span>
			<span className="absolute top-[978px] left-[830px]">4</span>
			<span className="absolute top-[1048px] left-[888px]">5</span>
		</div>
	);
}

/* ---------- desktop, widgets and taskbar ---------- */

const ShortcutBadge = () => (
	<Svg className="size-5" box="0 0 20 20">
		<path d="M0 0h20v20H0z" fill="#fff" />
		<path d="M6 18c-4-6-2-12 4-13V1l8 7-8 6v-5c-3 1-4 4-4 9z" fill="#2b5da8" />
	</Svg>
);

function DesktopIcons() {
	return (
		<>
			<div className="absolute top-[10px] left-7">
				<Svg className="h-10 w-11" box="0 0 44 40">
					<path d="M1 9l12-7 16 3 10-2v37H4z" fill="#e7e3dc" stroke="#b8b2a8" />
				</Svg>
			</div>
			<div className="absolute top-[171px] left-[26px] h-14 w-8 rounded bg-[#ffb81c]" />
			<div className="absolute top-[216px] left-5">
				<ShortcutBadge />
			</div>
			<span className="absolute top-[239px] left-0.5 text-white">火绒</span>
			<div className="absolute top-[500px] left-[27px] h-7 w-4 bg-[#4c5b63]" />
			<div className="absolute top-[650px] left-[25px] h-[43px] w-8 border-2 border-[#2f6f95] bg-[#5bb3e2]" />
			<span className="absolute top-[710px] left-5 text-white">控</span>
			<div className="absolute top-[808px] left-6 h-10 w-10 rounded-full bg-[#f0413f]" />
			<div className="absolute top-[844px] left-5">
				<ShortcutBadge />
			</div>
		</>
	);
}

const DuBear = ({ dot }: { dot?: boolean }) => (
	<Svg className="size-9" box="0 0 36 34">
		<circle cx="6.500" cy="7" r="5" fill="#1087ff" />
		<circle cx="28" cy="7" r="5" fill="#1087ff" />
		<path d="M4 12C7 4 28 4 31 12l1 10c-1 13-28 13-29 0z" fill="#0a80ff" />
		<text x="17.500" y="23.500" textAnchor="middle" fill="#fff" fontSize="17" fontWeight="700" fontStyle="italic">
			du
		</text>
		{dot && <circle cx="31.500" cy="4" r="4.200" fill="#e8414f" />}
	</Svg>
);
const GridIcon = () => (
	<Svg className="size-6">
		<path d="M2 2h7.500v7.500H2zM14 2h7.500v7.500H14zM2 14h7.500v7.500H2zM14 14h7.500v7.500H14z" stroke="#0a7bff" strokeWidth="2.400" />
	</Svg>
);

function ImeBars() {
	return (
		<>
			<div className="absolute top-[1353px] left-[1979px] flex h-12 w-[259px] items-start justify-between rounded-t bg-white px-3 pt-[7px] text-[#0a7bff]">
				<DuBear />
				<span className="pt-0.5 text-[24px] leading-7 font-medium">中</span>
				<Svg className="mt-1 size-6">
					<path d="M2 8h20v13H2zM8 7V3h8v4" stroke="currentColor" strokeWidth="2.400" />
				</Svg>
				<Svg className="mt-1 size-6">
					<path d="M13 2c1 7-2 11-8 12 1 7 15 6 15-3 0-4-3-7-7-9z" stroke="currentColor" strokeWidth="2.400" />
				</Svg>
				<Svg className="mt-1 size-7">
					<path d="M12 1c3 3 6 5 10 6v15H2V7c4-1 7-3 10-6z" fill="currentColor" />
					<circle cx="12" cy="10" r="3" fill="#fff" />
				</Svg>
				<span className="mt-1">
					<GridIcon />
				</span>
			</div>
			<div className="absolute top-[1264px] left-[2059px] flex h-[50px] w-[182px] items-center justify-between rounded-md border border-[#ddd] bg-white pr-4 pl-2.5 text-[#0a7bff] shadow">
				<DuBear dot />
				<span className="text-[25px] font-medium">中</span>
				<Svg className="size-6">
					<circle cx="6" cy="6" r="3.300" stroke="currentColor" strokeWidth="2.200" />
					<path d="M17 13.500a3.500 3.500 0 013 5.500l-4 5c1-2 1-3 0-4-3-1.500-2-6.500 1-6.500z" fill="currentColor" />
				</Svg>
				<GridIcon />
			</div>
		</>
	);
}

function NetWidget() {
	return (
		<div className="absolute top-[655px] left-[2114px] flex h-[63px] w-[126px] flex-col justify-center rounded-[3px] border border-[#333] bg-[#454545] pt-1 pl-3">
			<p className="flex h-[29px] items-center gap-1.5 text-[#ff9c1a]">
				<Svg className="size-[14px]" box="0 0 14 14">
					<path d="M7 14V1M1.500 6.500L7 1l5.500 5.500" stroke="currentColor" strokeWidth="1.600" />
				</Svg>
				0.0 KB/s
			</p>
			<p className="flex h-[29px] items-center gap-1.5 text-[#7df02a]">
				<Svg className="size-[14px]" box="0 0 14 14">
					<path d="M7 0v13M1.500 7.500L7 13l5.500-5.500" stroke="currentColor" strokeWidth="1.600" />
				</Svg>
				0.1 KB/s
			</p>
		</div>
	);
}

function EdgeMeter() {
	return (
		<div className="absolute top-[917px] right-0 h-[63px] w-[21px] rounded-l-[3px] border border-r-0 border-[#2b1a02] bg-[#452a04] pt-[7px] pl-[7px]">
			<Svg className="h-[47px] w-[5px]" box="0 0 5 47">
				<path d="M2.500 0v20M2.500 27v20" stroke="#664c28" strokeWidth="5" strokeDasharray="1 1" />
				<path d="M0 20.500h5" stroke="#ffa32b" strokeWidth="1" />
			</Svg>
		</div>
	);
}

const FirefoxIcon = () => (
	<Svg className="h-[42px] w-9" box="0 0 36 42">
		<defs>
			<linearGradient id="fox" x1="28" y1="3" x2="8" y2="40" gradientUnits="userSpaceOnUse">
				<stop stopColor="#fff44f" />
				<stop offset=".35" stopColor="#ffa02a" />
				<stop offset=".7" stopColor="#ff3d4f" />
				<stop offset="1" stopColor="#d80b83" />
			</linearGradient>
		</defs>
		<path d="M23 0c0 5 4 6 7 9 7 8 7 20 0 27-6 6-18 6-24 0C0 30-1 20 2 12c.5-2 2-4 3-5l1 4 3-5 2 6c3 0 5-1 7-3 1-3 2-7 5-9z" fill="url(#fox)" />
		<circle cx="18" cy="23" r="8" fill="#6b45d8" />
		<path d="M6 17c4-2 8-1 11 2-3 0-4 2-7 3 1 5 4 8 9 8-7 3-14-3-13-13z" fill="#ff9026" />
	</Svg>
);
const ExplorerIcon = () => (
	<Svg className="h-8 w-8" box="0 0 32 32">
		<path d="M0 1h13l2 3h17v26H0z" fill="#ffe79a" />
		<path d="M0 1h13l2 3-2 2H0z" fill="#ffc226" />
		<path d="M5.500 30.500V16h20.500v14.500h-6V22h-8.500v8.500z" fill="#3fb6e8" />
	</Svg>
);
const ServerManagerIcon = () => (
	<Svg className="h-10 w-9" box="0 0 36 40">
		<path d="M1 1h15.500v36H1z" fill="#2590dd" stroke="#e8f2fa" />
		<path d="M1 10h15.500" stroke="#e8f2fa" />
		<path d="M17.500 24v-4h7v4" stroke="#c9d5dd" strokeWidth="2" />
		<path d="M7.500 24h28v15h-28z" fill="#7494a8" stroke="#e8eef2" />
		<path d="M9 28h25M13.500 26.500v3M29.500 26.500v3" stroke="#fff" strokeWidth="1.400" />
	</Svg>
);

function TaskButton({ label, running, active, children }: { label: string; running?: boolean; active?: boolean; children: React.ReactNode }) {
	return (
		<button type="button" aria-label={label} className={clsx("flex h-full w-[73px] flex-col items-center", active && "bg-[#504636]")}>
			<span className="flex flex-1 items-center">{children}</span>
			<span className={clsx("h-[3px]", running && "w-[61px] bg-[#76b9ed]", active && "w-full bg-[#76b9ed]")} />
		</button>
	);
}

function Taskbar() {
	return (
		<footer className="flex h-[60px] shrink-0 items-center overflow-hidden bg-[#261603] text-white">
			<button type="button" aria-label="开始" className="flex w-[72px] justify-center">
				<Svg className="h-7 w-6" box="0 0 24 28">
					<path d="M0 3.500L10 2v11.300H0zM11.200 1.800L24 0v13.300H11.200zM0 14.700h10V26L0 24.500zM11.200 14.700H24V28l-12.800-1.800z" fill="#fff" />
				</Svg>
			</button>
			<button type="button" aria-label="搜索" className="flex w-[72px] justify-center">
				<Svg className="h-7 w-6" box="0 0 24 28">
					<circle cx="15" cy="9.500" r="8.500" stroke="#fff" strokeWidth="1.400" />
					<path d="M9.500 16L.5 27" stroke="#fff" strokeWidth="1.600" />
				</Svg>
			</button>
			<button type="button" aria-label="任务视图" className="flex w-[72px] justify-center">
				<Svg className="h-7 w-6" box="0 0 24 28">
					<path d="M.7 0v4h15V0M.7 8h15v12h-15zM.7 28v-4.500h15V28M22.500 0v8M22.500 12v16" stroke="#fff" strokeWidth="1.300" />
					<path d="M21 8.500h3v3.500h-3z" fill="#fff" />
				</Svg>
			</button>
			<div className="ml-1 flex h-full gap-0.5">
				<TaskButton label="Firefox">
					<FirefoxIcon />
				</TaskButton>
				<TaskButton label="文件资源管理器">
					<ExplorerIcon />
				</TaskButton>
				<TaskButton label="服务器管理器" running>
					<ServerManagerIcon />
				</TaskButton>
				<TaskButton label="组策略管理" running>
					<BigScrollIcon tools />
				</TaskButton>
				<TaskButton label="组策略管理编辑器" active>
					<BigScrollIcon />
				</TaskButton>
			</div>
			<div className="ml-auto flex items-center">
				<Svg className="h-2.5 w-[18px]" box="0 0 18 10">
					<path d="M1 9.500L9 1l8 8.500" stroke="#fff" strokeWidth="1.400" />
				</Svg>
				<Svg className="ml-[15px] h-5 w-6" box="0 0 24 20">
					<path d="M7 1h16v13.500H3V7M9 19h9M13.500 14.500V19M.7 1h6v5.500h-6zM3 1v2.500" stroke="#fff" strokeWidth="1.200" />
				</Svg>
				<Svg className="ml-3 h-6 w-6">
					<path d="M1 8h3l5.500-6v18L4 14H1z" stroke="#fff" strokeWidth="1.200" />
					<circle cx="17.500" cy="17" r="6.500" fill="#e3242b" />
					<path d="M15 14.500l5 5M20 14.500l-5 5" stroke="#fff" strokeWidth="1.400" />
				</Svg>
				<span className="ml-[11px] text-[17px] font-medium">中</span>
				<span className="ml-6 flex size-6 items-center justify-center rounded-sm bg-[#0c9cf0] text-[17px] font-bold italic">du</span>
				<div className="ml-[21px] flex w-[102px] flex-col items-center text-[18px]">
					<span className="leading-7">10:22</span>
					<span className="leading-7">2024/5/31</span>
				</div>
				<Svg className="ml-[25px] size-6">
					<path d="M.7 1h22.600v18h-9L11 22.500 8.500 19H.7z" stroke="#fff" strokeWidth="1.300" />
				</Svg>
				<span className="mr-1 ml-8 h-[60px] w-0.5 bg-[#75695a]" />
			</div>
		</footer>
	);
}

export default function App() {
	return (
		<div className={clsx("relative flex h-screen flex-col overflow-hidden bg-[#ff9600] text-[18px] leading-6", uiFont)}>
			<main className="relative min-h-0 flex-1 overflow-hidden">
				<DesktopIcons />
				<ServerManager />
				<PolicyConsole />
				<PolicyEditor />
				<PropertiesDialog />
				<ContextMenu />
				<StepMarkers />
				<NetWidget />
				<EdgeMeter />
			</main>
			<Taskbar />
			<ImeBars />
		</div>
	);
}
